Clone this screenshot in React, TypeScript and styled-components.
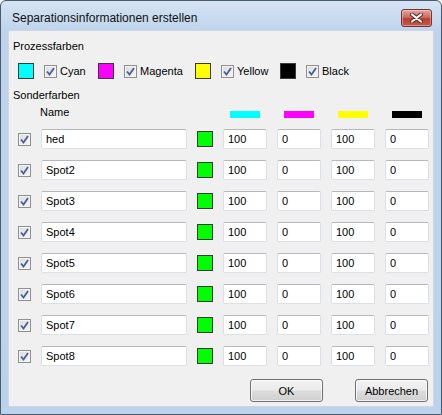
import React from 'react';
import styled, { createGlobalStyle } from 'styled-components';

const GlobalStyle = createGlobalStyle`
  html, body {
    margin: 0;
    padding: 0;
    background: #ffffff;
  }
  body {
    font-family: "Liberation Sans", Arial, sans-serif;
    font-size: 11px;
    color: #000;
  }
`

const Window = styled.div`
  width: 442px;
  height: 415px;
  box-sizing: border-box;
  border: 1px solid #4b5a6e;
  border-radius: 6px 6px 0 0;
  background: linear-gradient(#d6e4f4, #bfd4ec 29px, #bbd2eb);
  padding: 0 7px 7px 7px;
  display: flex;
  flex-direction: column;
`

const TitleBar = styled.div`
  height: 29px;
  flex: none;
  display: flex;
  justify-content: space-between;
  align-items: flex-start;
  padding-right: 2px;
`

const Title = styled.div`
  font-size: 12px;
  line-height: 14px;
  margin: 10px 0 0 4px;
  color: #111;
`

const CloseButton = styled.div`
  width: 29px;
  height: 16px;
  margin-top: 8px;
  border: 1px solid #6e3530;
  border-radius: 3px;
  background: linear-gradient(#e3a59d, #cf6a5e 45%, #bb3e31 55%, #c9584a);
  box-shadow: inset 0 0 0 1px rgba(255, 255, 255, 0.35);
  display: flex;
  align-items: center;
  justify-content: center;
`

const Panel = styled.div`
  flex: 1;
  background: #f0f0f0;
  border: 1px solid #c9d7e8;
  padding: 9px 5px 0 4px;
  display: flex;
  flex-direction: column;
`

const SectionLabel = styled.div<{ $top?: number }>`
  line-height: 13px;
  margin-top: ${p => p.$top ?? 0}px;
`

const ProcessRow = styled.div`
  display: grid;
  grid-template-columns: 80px 97px 85px auto;
  height: 16px;
  margin: 10px 0 0 5px;
`

const ProcessItem = styled.div`
  display: flex;
  align-items: center;
`

const Swatch = styled.div<{ $color: string }>`
  width: 16px;
  height: 16px;
  box-sizing: border-box;
  border: 1px solid #3a3a3a;
  background: ${p => p.$color};
  flex: none;
`

const Box = styled.span<{ $left?: number }>`
  width: 13px;
  height: 13px;
  margin-left: ${p => p.$left ?? 0}px;
  box-sizing: border-box;
  border: 1px solid #8e8f8f;
  background: linear-gradient(135deg, #dcdcdc, #f6f6f6);
  box-shadow: inset 0 0 0 1px #f4f4f4;
  display: inline-flex;
  align-items: center;
  justify-content: center;
  flex: none;
`

const CheckLabel = styled.span`
  margin-left: 3px;
  line-height: 13px;
`

const SpotGrid = styled.div`
  display: grid;
  grid-template-columns: 13px 146px 16px repeat(4, 44px);
  grid-template-rows: 12px repeat(8, 20px);
  column-gap: 10px;
  row-gap: 11px;
  align-items: center;
  margin: 4px 0 0 5px;
`

const NameHead = styled.div`
  grid-column: 2;
  margin-left: -1px;
  line-height: 12px;
`

const InkBar = styled.div<{ $color: string }>`
  width: 30px;
  height: 7px;
  background: ${p => p.$color};
  justify-self: center;
  align-self: end;
`

const HeadGap = styled.span``

const Field = styled.input`
  width: 100%;
  height: 20px;
  box-sizing: border-box;
  margin: 0;
  padding: 0 4px;
  border: 1px solid #dbdfe6;
  border-top-color: #b5b8bf;
  border-radius: 2px;
  background: #fff;
  font-family: "Liberation Sans", Arial, sans-serif;
  font-size: 11px;
  color: #000;
  outline: none;
`

const ButtonRow = styled.div`
  display: flex;
  justify-content: flex-end;
  gap: 32px;
  margin-top: 13px;
`

const Button = styled.div`
  width: 73px;
  height: 23px;
  box-sizing: border-box;
  border: 1px solid #707070;
  border-radius: 3px;
  background: linear-gradient(#f2f2f2, #ebebeb 48%, #dddddd 52%, #cfcfcf);
  box-shadow: inset 0 0 0 1px rgba(255, 255, 255, 0.7);
  display: flex;
  align-items: center;
  justify-content: center;
`

const Check = ({ left }: { left?: number }) => (
  <Box $left={left}>
    <svg width="9" height="9" viewBox="0 0 9 9">
      <path d="M1 4.5 L3.5 7.5 L8 1" fill="none" stroke="#4a5f97" strokeWidth="1.8" />
    </svg>
  </Box>
)

const process = [
  { color: '#00ffff', name: 'Cyan' },
  { color: '#ff00ff', name: 'Magenta' },
  { color: '#ffff00', name: 'Yellow' },
  { color: '#000000', name: 'Black' },
]

const inks = ['#00ffff', '#ff00ff', '#ffff00', '#000000']

const spots = ['hed', 'Spot2', 'Spot3', 'Spot4', 'Spot5', 'Spot6', 'Spot7', 'Spot8']
const values = ['100', '0', '100', '0']

const App: React.FC = () => {
  return (
    <>
      <GlobalStyle />
      <Window>
        <TitleBar>
          <Title>Separationsinformationen erstellen</Title>
          <CloseButton>
            <svg width="13" height="10" viewBox="0 0 13 10">
              <path d="M2 1.5 L11 8.5 M11 1.5 L2 8.5" stroke="#5a2420" strokeWidth="4" strokeLinecap="round" />
              <path d="M2 1.5 L11 8.5 M11 1.5 L2 8.5" stroke="#ffffff" strokeWidth="2.2" strokeLinecap="round" />
            </svg>
          </CloseButton>
        </TitleBar>
        <Panel>
          <SectionLabel>Prozessfarben</SectionLabel>
          <ProcessRow>
            {process.map(p => (
              <ProcessItem key={p.name}>
                <Swatch $color={p.color} />
                <Check left={10} />
                <CheckLabel>{p.name}</CheckLabel>
              </ProcessItem>
            ))}
          </ProcessRow>
          <SectionLabel $top={10}>Sonderfarben</SectionLabel>
          <SpotGrid>
            <NameHead>Name</NameHead>
            <HeadGap />
            {inks.map(c => <InkBar key={c} $color={c} />)}
            {spots.map(name => (
              <React.Fragment key={name}>
                <Check />
                <Field readOnly value={name} />
                <Swatch $color="#00ff00" />
                {values.map((v, i) => <Field key={i} readOnly value={v} />)}
              </React.Fragment>
            ))}
          </SpotGrid>
          <ButtonRow>
            <Button>OK</Button>
            <Button>Abbrechen</Button>
          </ButtonRow>
        </Panel>
      </Window>
    </>
  );
}

export default App;
